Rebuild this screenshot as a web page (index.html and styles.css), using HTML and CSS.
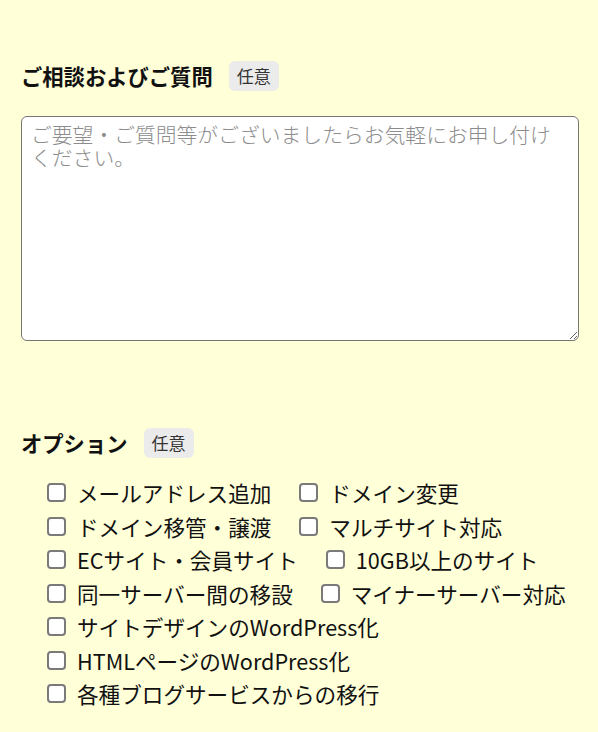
FILE: index.html
```html
<!DOCTYPE html>
<html lang="ja">
<head>
    <meta charset="UTF-8">
    <meta name="viewport" content="width=device-width, initial-scale=1.0">
    <title>お問い合わせ</title>
    <link rel="stylesheet" href="styles.css">
</head>
<body>
    <form class="contact-form">
        <div class="field">
            <div class="field-head">
                <label class="field-title" for="message">ご相談およびご質問</label>
                <span class="badge">任意</span>
            </div>
            <textarea id="message" class="message" placeholder="ご要望・ご質問等がございましたらお気軽にお申し付けください。"></textarea>
        </div>

        <div class="field options-field">
            <div class="field-head">
                <span class="field-title">オプション</span>
                <span class="badge">任意</span>
            </div>
            <div class="options">
                <label class="option"><input type="checkbox" name="option[]" value="mail">メールアドレス追加</label>
                <label class="option"><input type="checkbox" name="option[]" value="domain">ドメイン変更</label>
                <label class="option"><input type="checkbox" name="option[]" value="transfer">ドメイン移管・譲渡</label>
                <label class="option"><input type="checkbox" name="option[]" value="multisite">マルチサイト対応</label>
                <label class="option"><input type="checkbox" name="option[]" value="ec">ECサイト・会員サイト</label>
                <label class="option"><input type="checkbox" name="option[]" value="large">10GB以上のサイト</label>
                <label class="option"><input type="checkbox" name="option[]" value="same">同一サーバー間の移設</label>
                <label class="option"><input type="checkbox" name="option[]" value="minor">マイナーサーバー対応</label>
                <label class="option"><input type="checkbox" name="option[]" value="design">サイトデザインのWordPress化</label>
                <label class="option"><input type="checkbox" name="option[]" value="html">HTMLページのWordPress化</label>
                <label class="option"><input type="checkbox" name="option[]" value="blog">各種ブログサービスからの移行</label>
            </div>
        </div>
    </form>
</body>
</html>
```

FILE: styles.css
```css
body {
    margin: 0;
    padding: 0;
    background-color: #ffffd8;
    color: #111;
    font-family: "Noto Sans CJK JP", "Noto Sans", sans-serif;
}

.contact-form {
    padding: 61px 19px 0 21px;
}

.field-head {
    display: flex;
    align-items: center;
    gap: 16px;
}

.field-title {
    font-size: 21.3px;
    font-weight: bold;
    line-height: 30px;
}

.badge {
    background-color: #ebebeb;
    color: #333;
    font-size: 17px;
    line-height: 22px;
    padding: 4px 8px;
    border-radius: 6px;
}

.message {
    display: block;
    box-sizing: border-box;
    width: 100%;
    height: 225px;
    margin: 25px 0 0;
    padding: 6px 9px;
    border: 1px solid #767676;
    border-radius: 6px;
    background-color: #fff;
    font-family: "Noto Sans CJK JP", sans-serif;
    font-size: 20.8px;
    font-weight: 300;
    line-height: 23px;
}

.message::placeholder {
    color: #8c8c8c;
}

.options-field {
    margin-top: 87px;
}

.options {
    display: flex;
    flex-wrap: wrap;
    column-gap: 28px;
    margin-top: 18px;
    padding-left: 26px;
}

.option {
    display: flex;
    align-items: center;
    gap: 11px;
    font-size: 21.6px;
    line-height: 33.5px;
}

.option input {
    appearance: none;
    flex-shrink: 0;
    box-sizing: border-box;
    width: 19px;
    height: 19px;
    margin: 0;
    border: 2px solid #7a7a7a;
    border-radius: 4px;
    background-color: #fff;
}
```
